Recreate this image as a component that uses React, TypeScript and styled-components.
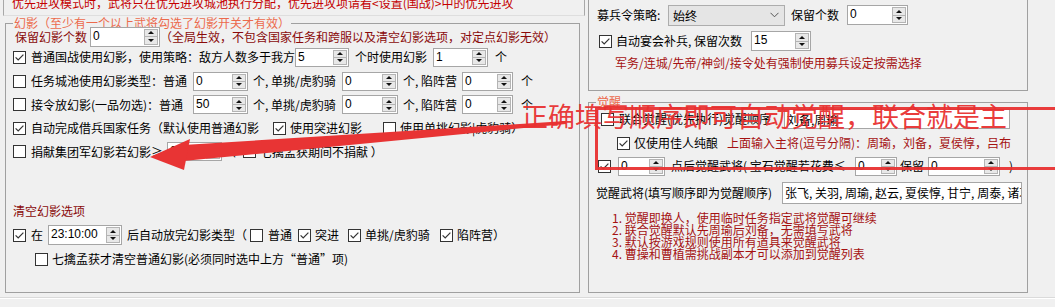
import React from "react";
import styled, { createGlobalStyle } from "styled-components";

const GlobalStyle = createGlobalStyle`
  html, body {
    margin: 0;
    padding: 0;
    background: #f0f0f0;
  }
  body {
    font-family: "Noto Sans CJK SC", "Noto Sans", sans-serif;
    font-size: 12px;
    color: #000;
  }
`;

const C = {
  notice: "#c40000",
  maroon: "#8a0a0a",
  legend: "#ec6a4c",
  hint: "#a51212",
  mark: "rgba(232, 48, 48, 0.94)",
};

const Screen = styled.div`
  position: relative;
  width: 1055px;
  height: 307px;
  overflow: hidden;
`;

const Columns = styled.div`
  display: flex;
  align-items: flex-start;
  height: 297px;
`;

const LeftCol = styled.div`
  width: 588px;
  flex-shrink: 0;
`;

const RightCol = styled.div`
  width: 440px;
  flex-shrink: 0;
`;

const TopStrip = styled.div`
  box-sizing: border-box;
  width: 582px;
  height: 16px;
  margin-left: 3px;
  padding-left: 8px;
  border: 1px solid #a8a8a8;
  border-top: none;
  border-bottom-color: #dedede;
  overflow: hidden;
`;

const Notice = styled.div`
  margin-top: -5px;
  line-height: 16px;
  color: ${C.notice};
  white-space: nowrap;
`;

const Group = styled.fieldset<{ $w: number; $h: number; $ml?: number; $mt?: number }>`
  box-sizing: border-box;
  display: flex;
  flex-direction: column;
  width: ${(p) => p.$w}px;
  height: ${(p) => p.$h}px;
  min-width: 0;
  margin: ${(p) => p.$mt ?? 0}px 0 0 ${(p) => p.$ml ?? 0}px;
  padding: 0 0 0 7px;
  border: 1px solid #a0a0a0;
`;

const Legend = styled.legend`
  padding: 0 1px;
  line-height: 14px;
  color: ${C.legend};
`;

const RecruitPanel = styled.div`
  box-sizing: border-box;
  display: flex;
  flex-direction: column;
  height: 91px;
  padding-left: 8px;
  border: 1px solid #a0a0a0;
  border-top: none;
`;

const Row = styled.div<{ $h?: number; $mt?: number; $pl?: number }>`
  display: flex;
  align-items: center;
  flex-shrink: 0;
  height: ${(p) => p.$h ?? 24}px;
  margin-top: ${(p) => p.$mt ?? 0}px;
  padding-left: ${(p) => p.$pl ?? 0}px;
  white-space: nowrap;
`;

const Text = styled.span<{ $w?: number; $ml?: number; $c?: string }>`
  display: inline-block;
  flex-shrink: 0;
  width: ${(p) => (p.$w ? `${p.$w}px` : "auto")};
  margin-left: ${(p) => p.$ml ?? 0}px;
  color: ${(p) => p.$c ?? "#000"};
  line-height: 16px;
`;

const SectionTitle = styled.div`
  margin-top: 40px;
  line-height: 16px;
  color: ${C.maroon};
`;

const Box = styled.span<{ $ml?: number }>`
  box-sizing: border-box;
  display: inline-flex;
  align-items: center;
  justify-content: center;
  flex-shrink: 0;
  width: 13px;
  height: 13px;
  margin-left: ${(p) => p.$ml ?? 0}px;
  border: 1px solid #333;
  background: #fff;
`;

const Check = ({ on, ml }: { on?: boolean; ml?: number }) => (
  <Box $ml={ml}>
    {on && (
      <svg width="11" height="11" viewBox="0 0 11 11">
        <path d="M1.6 5.4 L4.2 8 L9.4 2.6" fill="none" stroke="#333" strokeWidth="1.2" />
      </svg>
    )}
  </Box>
);

const Edit = styled.div<{ $w: number; $h?: number; $ml?: number }>`
  box-sizing: border-box;
  display: flex;
  flex-shrink: 0;
  width: ${(p) => p.$w}px;
  height: ${(p) => p.$h ?? 19}px;
  margin-left: ${(p) => p.$ml ?? 0}px;
  border: 1px solid #a6a6a6;
  background: #fff;
  overflow: hidden;
`;

const Value = styled.span<{ $cjk?: boolean }>`
  flex: 1;
  min-width: 0;
  padding: 1px 0 0 2px;
  font-family: ${(p) =>
    p.$cjk ? `"Noto Sans CJK SC", sans-serif` : `"Liberation Sans", "DejaVu Sans", sans-serif`};
  line-height: ${(p) => (p.$cjk ? 17 : 14)}px;
  white-space: nowrap;
  overflow: hidden;
`;

const Spinner = styled.span`
  box-sizing: border-box;
  display: flex;
  flex-direction: column;
  width: 14px;
  margin: 1px 1px 1px 0;
  border: 1px solid #b4b4b4;
  background: #e8e8e8;
`;

const Half = styled.span<{ $down?: boolean }>`
  flex: 1;
  display: flex;
  align-items: center;
  justify-content: center;
  border-top: ${(p) => (p.$down ? "1px solid #b4b4b4" : "none")};

  &::after {
    content: "";
    border-left: 3px solid transparent;
    border-right: 3px solid transparent;
    ${(p) => (p.$down ? "border-top: 3px solid #111;" : "border-bottom: 3px solid #111;")}
  }
`;

const Spin = ({ w, v, h, ml }: { w: number; v: string; h?: number; ml?: number }) => (
  <Edit $w={w} $h={h} $ml={ml}>
    <Value>{v}</Value>
    <Spinner>
      <Half />
      <Half $down />
    </Spinner>
  </Edit>
);

const Select = styled.div<{ $w: number }>`
  box-sizing: border-box;
  display: flex;
  align-items: center;
  justify-content: space-between;
  flex-shrink: 0;
  width: ${(p) => p.$w}px;
  height: 21px;
  padding: 0 5px 0 4px;
  border: 1px solid #adadad;
  background: #e5e5e5;
`;

const Notes = styled.ol`
  margin: 8px 0 0;
  padding: 0 0 0 16px;
  list-style: none;
  color: ${C.hint};
  line-height: 12px;
`;

const Footer = styled.div`
  height: 10px;
  border-top: 1px solid #dadada;
  box-shadow: inset 0 1px 0 #fff;
`;

const Callout = styled.div`
  position: absolute;
  left: 521px;
  top: 101px;
  font-size: 27px;
  line-height: 30px;
  color: ${C.mark};
  white-space: nowrap;
  pointer-events: none;
`;

const Frame = styled.div`
  position: absolute;
  left: 595px;
  top: 107px;
  width: 470px;
  height: 63px;
  box-sizing: border-box;
  border: 3px solid ${C.mark};
  pointer-events: none;
`;

const Overlay = styled.svg`
  position: absolute;
  left: 0;
  top: 0;
  pointer-events: none;
`;

const notes = [
  "1. 觉醒即换人，使用临时任务指定武将觉醒可继续",
  "2. 联合觉醒默认先周瑜后刘备，无需填写武将",
  "3. 默认按游戏规则使用所有道具来觉醒武将",
  "4. 曹操和曹植需挑战副本才可以添加到觉醒列表",
];

const App = () => {
  return (
    <Screen>
      <GlobalStyle />
      <Columns>
        <LeftCol>
          <TopStrip>
            <Notice>
              优先进攻模式时，武将只在优先进攻城池执行分配，优先进攻项请看&lt;设置(国战)&gt;中的优先进攻
            </Notice>
          </TopStrip>

          <Group $w={575} $h={277} $ml={5}>
            <Legend>幻影（至少有一个以上武将勾选了幻影开关才有效）</Legend>

            <Row $h={17} $mt={-2} $pl={2}>
              <Text $w={75} $c={C.maroon}>保留幻影个数</Text>
              <Spin w={70} v="0" h={20} />
              <Text $c={C.maroon}>（全局生效，不包含国家任务和跨服以及清空幻影选项，对定点幻影无效）</Text>
            </Row>

            <Row>
              <Check on />
              <Text $w={258} $ml={5}>普通国战使用幻影，使用策略：敌方人数多于我方</Text>
              <Spin w={54} v="5" ml={6} />
              <Text $w={72} $ml={6}>个时使用幻影</Text>
              <Spin w={55} v="1" ml={6} />
              <Text $ml={7}>个</Text>
            </Row>

            <Row>
              <Check />
              <Text $w={156} $ml={5}>任务城池使用幻影类型：普通</Text>
              <Spin w={55} v="0" ml={6} />
              <Text $w={83} $ml={5}>个, 单挑/虎豹骑</Text>
              <Spin w={56} v="0" ml={6} />
              <Text $w={53} $ml={5}>个, 陷阵营</Text>
              <Spin w={51} v="0" ml={6} />
              <Text $ml={8}>个</Text>
            </Row>

            <Row $h={23}>
              <Check />
              <Text $w={156} $ml={5}>接令放幻影(一品勿选)：普通</Text>
              <Spin w={55} v="50" ml={6} />
              <Text $w={83} $ml={5}>个, 单挑/虎豹骑</Text>
              <Spin w={56} v="0" ml={6} />
              <Text $w={53} $ml={5}>个, 陷阵营</Text>
              <Spin w={51} v="0" ml={6} />
              <Text $ml={8}>个</Text>
            </Row>

            <Row>
              <Check on />
              <Text $w={237} $ml={5}>自动完成借兵国家任务（默认使用普通幻影</Text>
              <Check on ml={5} />
              <Text $w={88} $ml={4}>使用突进幻影</Text>
              <Check ml={5} />
              <Text $ml={4}>使用单挑幻影|虎豹骑）</Text>
            </Row>

            <Row $h={23}>
              <Check />
              <Text $w={131} $ml={5}>捐献集团军幻影若幻影≥</Text>
              <Spin w={55} v="0" ml={5} />
              <Text $w={16} $ml={2}>（</Text>
              <Check ml={3} />
              <Text $ml={4}>七擒孟获期间不捐献 ）</Text>
            </Row>

            <SectionTitle>清空幻影选项</SectionTitle>

            <Row $mt={4}>
              <Check on />
              <Text $w={12} $ml={5}>在</Text>
              <Spin w={74} v="23:10:00" h={20} ml={5} />
              <Text $w={120} $ml={5}>后自动放完幻影类型（</Text>
              <Check ml={3} />
              <Text $w={24} $ml={5}>普通</Text>
              <Check on ml={6} />
              <Text $w={24} $ml={4}>突进</Text>
              <Check on ml={9} />
              <Text $w={64} $ml={4}>单挑/虎豹骑</Text>
              <Check on ml={11} />
              <Text $ml={4}>陷阵营）</Text>
            </Row>

            <Row $pl={22}>
              <Check />
              <Text $ml={4}>七擒孟获才清空普通幻影(必须同时选中上方“普通”项)</Text>
            </Row>
          </Group>
        </LeftCol>

        <RightCol>
          <RecruitPanel>
            <Row $h={22} $mt={4}>
              <Text $w={71}>募兵令策略:</Text>
              <Select $w={117}>
                <span>始终</span>
                <svg width="9" height="6" viewBox="0 0 9 6">
                  <path d="M0.5 0.8 L4.5 4.8 L8.5 0.8" fill="none" stroke="#555" strokeWidth="1" />
                </svg>
              </Select>
              <Text $w={50} $ml={6}>保留个数</Text>
              <Spin w={61} v="0" h={20} ml={6} />
            </Row>
            <Row $h={22} $mt={4} $pl={2}>
              <Check on />
              <Text $w={131} $ml={4}>自动宴会补兵, 保留次数</Text>
              <Spin w={60} v="15" h={20} ml={4} />
            </Row>
            <Row $h={22} $pl={18}>
              <Text $c={C.hint}>军务/连城/先帝/神剑/接令处有强制使用募兵设定按需选择</Text>
            </Row>
          </RecruitPanel>

          <Group $w={440} $h={198} $mt={4}>
            <Legend>觉醒</Legend>

            <Row $h={20} $pl={5}>
              <Check />
              <Text $w={165} $ml={5}>联合觉醒(优先执行)觉醒顺序</Text>
              <Edit $w={226} $h={20}>
                <Value $cjk>刘备,周瑜</Value>
              </Edit>
            </Row>

            <Row $mt={2} $pl={21}>
              <Check on />
              <Text $w={93} $ml={4}>仅使用佳人纯酿</Text>
              <Text $c={C.hint}>上面输入主将(逗号分隔)：周瑜，刘备，夏侯惇，吕布</Text>
            </Row>

            <Row $h={22} $pl={2}>
              <Check on />
              <Spin w={47} v="0" ml={7} />
              <Text $w={184} $ml={6}>点后觉醒武将( 宝石觉醒若花费≤</Text>
              <Spin w={42} v="0" />
              <Text $w={28} $ml={3}>保留</Text>
              <Spin w={72} v="0" />
              <Text $ml={9}>)</Text>
            </Row>

            <Row $h={22} $mt={5}>
              <Text $w={186}>觉醒武将(填写顺序即为觉醒顺序)</Text>
              <Edit $w={240} $h={22}>
                <Value $cjk>张飞, 关羽, 周瑜, 赵云, 夏侯惇, 甘宁, 周泰, 诸葛亮</Value>
              </Edit>
            </Row>

            <Notes>
              {notes.map((n) => (
                <li key={n}>{n}</li>
              ))}
            </Notes>
          </Group>
        </RightCol>
      </Columns>
      <Footer />

      <Frame />
      <Overlay width="1055" height="307" viewBox="0 0 1055 307">
        <polygon points="183,145 566,121 566,124 183,161" fill="rgb(232,52,52)" />
        <polygon points="150,157 190,139 184,170" fill="rgb(232,52,52)" />
      </Overlay>
      <Callout>正确填写顺序即可自动觉醒，联合就是主</Callout>
    </Screen>
  );
};

export default App;
